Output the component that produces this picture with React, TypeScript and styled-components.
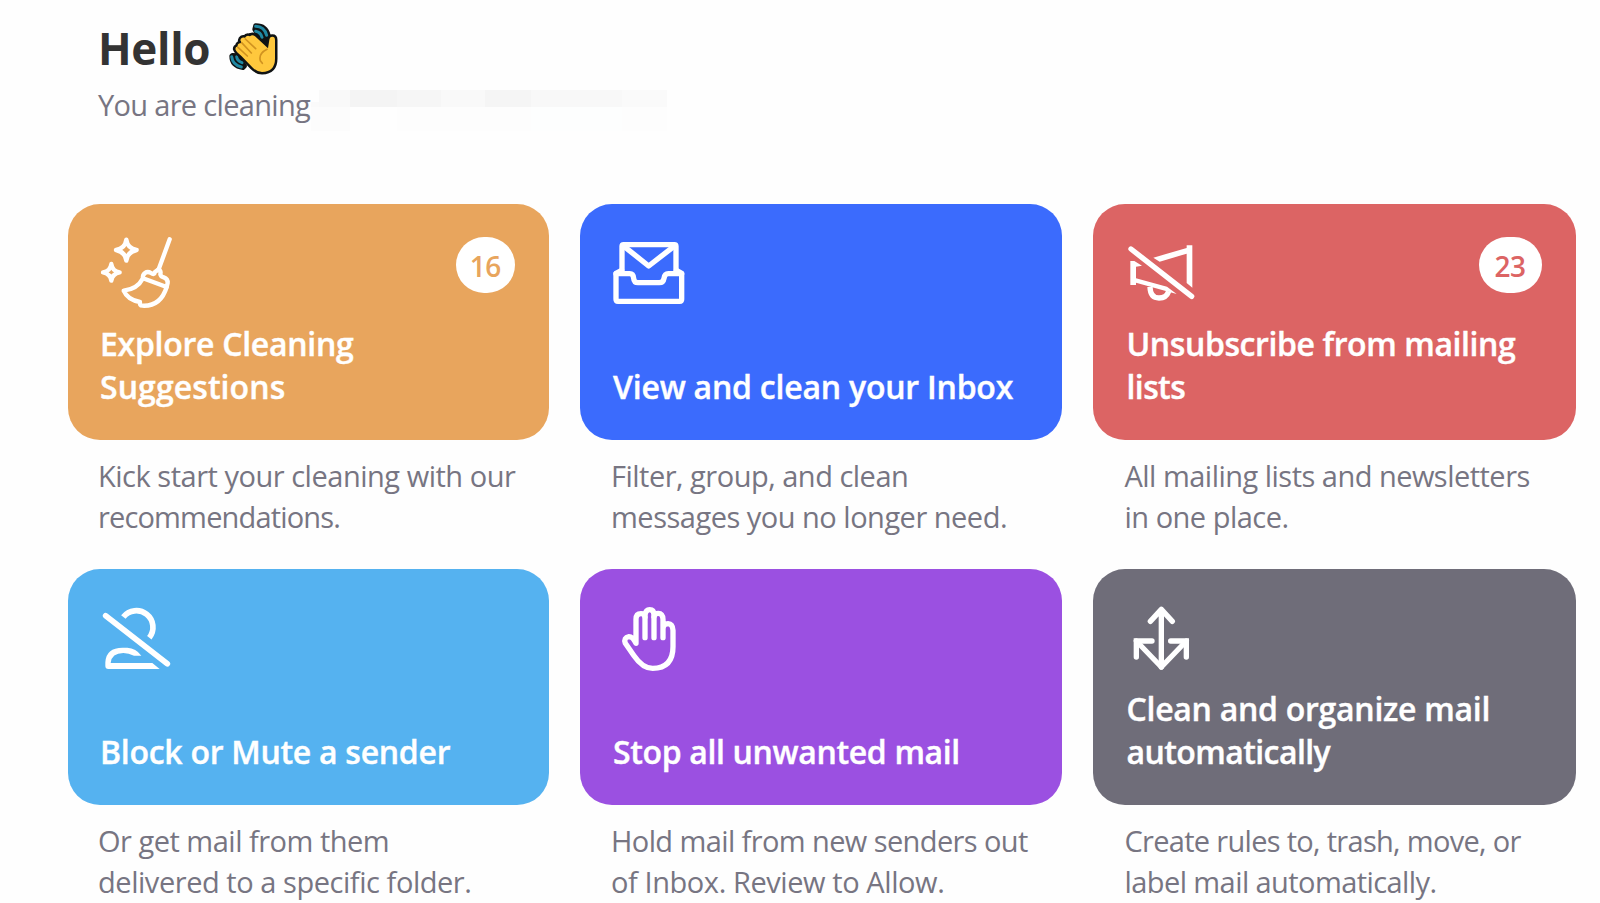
import React from "react";
import styled, { createGlobalStyle, ThemeProvider } from "styled-components";

const theme = {
  colors: {
    page: "#fefefe",
    heading: "#333333",
    muted: "#777582",
    white: "#ffffff",
    orange: "#e8a55d",
    blue: "#3b6bfd",
    red: "#dc6464",
    sky: "#55b2f0",
    purple: "#9b50e1",
    slate: "#6f6d79",
  },
};

type ColorName = keyof typeof theme.colors;

interface TextLine {
  text: string;
  tracking: number;
}

interface ActionCardProps {
  color: ColorName;
  icon: React.ReactNode;
  title: TextLine[];
  description: TextLine[];
  badge?: { count: number; width: number };
}

const GlobalStyle = createGlobalStyle`
  body {
    margin: 0;
    background: ${theme.colors.page};
    font-family: "Segoe UI", "Open Sans", "Noto Sans", sans-serif;
    overflow: hidden;
  }

  * {
    box-sizing: border-box;
  }
`;

const Page = styled.main`
  width: 1600px;
  height: 903px;
  overflow: hidden;
`;

const Header = styled.header`
  height: 204px;
  padding: 18px 0 0 98px;
`;

const Greeting = styled.div`
  display: flex;
  align-items: flex-start;
  height: 60px;
`;

const Heading = styled.h1`
  width: 131px;
  margin: 0;
  color: ${({ theme }) => theme.colors.heading};
  font-size: 44px;
  font-weight: 700;
  line-height: 60px;
  letter-spacing: -0.3px;
`;

const WaveIcon = styled.svg`
  width: 49px;
  height: 52px;
  margin-top: 5px;
`;

const Account = styled.div`
  display: flex;
  align-items: flex-start;
  padding-top: 6px;
`;

const AccountLabel = styled.span`
  width: 213px;
  color: ${({ theme }) => theme.colors.muted};
  font-size: 29px;
  line-height: 41px;
  letter-spacing: -0.68px;
  white-space: nowrap;
`;

const HiddenAddress = styled.div`
  display: flex;
  align-items: flex-end;
  height: 41px;
  margin-top: 6px;
`;

const HiddenBlock = styled.span<{ $width: number; $top: number; $upper: string; $lower: string }>`
  width: ${({ $width }) => $width}px;
  height: ${({ $top }) => $top + 24}px;
  background: ${({ $lower }) => $lower};
  border-top: ${({ $top, $upper }) => `${$top}px solid ${$upper}`};
`;

const CardGrid = styled.section`
  display: grid;
  grid-template-columns: 481px 481.5px 483px;
  column-gap: 31px;
  row-gap: 32px;
  padding-left: 68px;
`;

const Tile = styled.div<{ $color: ColorName }>`
  display: flex;
  flex-direction: column;
  justify-content: space-between;
  height: 236px;
  padding: 31px 34px 32px 32px;
  border-radius: 32px;
  color: ${({ theme }) => theme.colors.white};
  background: ${({ theme, $color }) => theme.colors[$color]};
`;

const TileTop = styled.div`
  display: flex;
  justify-content: space-between;
  height: 75px;
`;

const IconSvg = styled.svg<{ $weight?: number }>`
  width: 75px;
  height: 75px;
  fill: none;
  stroke: currentColor;
  stroke-width: ${({ $weight }) => $weight ?? 16};
  stroke-linecap: round;
  stroke-linejoin: round;
`;

const Badge = styled.span<{ $color: ColorName; $width: number }>`
  width: ${({ $width }) => $width}px;
  height: 56px;
  margin-top: 2px;
  border-radius: 28px;
  color: ${({ theme, $color }) => theme.colors[$color]};
  background: ${({ theme }) => theme.colors.white};
  font-size: 28px;
  font-weight: 600;
  line-height: 58px;
  letter-spacing: -0.5px;
  text-align: center;
`;

const Title = styled.h2`
  margin: 0;
  font-size: 32px;
  font-weight: 600;
  line-height: 43px;
  -webkit-text-stroke: 0.4px currentColor;
`;

const Description = styled.p`
  margin: 0;
  padding: 15px 0 0 31px;
  color: ${({ theme }) => theme.colors.muted};
  font-size: 29px;
  line-height: 41px;
`;

const Card = styled.article`
  &:nth-child(3n + 1) ${Description} {
    padding-left: 30px;
  }

  &:nth-child(3n + 2) ${Title} {
    padding-left: 1px;
  }

  &:nth-child(3n) ${Title} {
    padding-left: 2px;
  }

  &:nth-child(3n) ${Description} {
    padding-left: 32px;
  }
`;

const Line = styled.span<{ $tracking: number }>`
  display: block;
  letter-spacing: ${({ $tracking }) => $tracking}px;
  white-space: nowrap;
`;

const BroomIcon = () => (
  <IconSvg viewBox="120 120 225 225" $weight={13}>
    <path d="M199 134Q203 161 230 165Q203 170 199 197Q195 170 168 165Q195 161 199 134Z" />
    <path d="M154 207Q157 229 179 232Q157 236 154 257Q151 236 129 232Q151 229 154 207Z" />
    <path d="M329 133 296 223" />
    <path d="M249 250Q247 240 255 234Q263 228 273 234Q283 241 285 231L296 223Q304 229 301 238Q303 245 311 247Q324 252 323 264L320 276Z" />
    <path d="M249 250Q232 283 191 287Q203 315 240 321Q238 332 247 332Q302 335 320 276" />
  </IconSvg>
);

const InboxIcon = () => (
  <IconSvg viewBox="126 120 225 225">
    <path d="M156 224V154Q156 149 161 149H313Q318 149 318 154V224" />
    <path d="M162 154 236 213 312 154" />
    <path d="M155 226 138 235V313Q138 319 144 319H329Q335 319 335 313V235L319 226" />
    <path d="M138 236H179Q190 236 191 250Q192 263 204 263H268Q280 263 282 250Q284 236 295 236H335" />
  </IconSvg>
);

const MegaphoneOffIcon = () => (
  <IconSvg viewBox="120 120 225 225">
    <path d="M138 162 320 304" />
    <g fill="currentColor" stroke="none">
      <path d="M205 188 305 159V151H322V278L305 264V176L224 200Z" />
      <path d="M136 198H148L171 212 153 215V250L246 275 275 297 153 263V270H136Z" />
    </g>
    <path d="M195 276Q196 309 222 309Q244 309 251 289" strokeLinecap="butt" />
  </IconSvg>
);

const BlockUserIcon = () => (
  <IconSvg viewBox="120 120 225 225" $weight={17}>
    <path d="M137 167 322 311" />
    <path d="M190 171A49 49 0 1 1 268 233" strokeLinecap="butt" />
    <path
      d="M136 318V307Q138 263 188 263H202Q228 264 244 287H222Q206 279 190 279Q155 279 152 309H277L299 327H145Q136 327 136 318Z"
      fill="currentColor"
      stroke="none"
    />
  </IconSvg>
);

const HandIcon = () => (
  <IconSvg viewBox="126 120 225 225">
    <path d="M225 233V165Q227 149 239 149Q252 149 252 165V233" />
    <path d="M225 171Q224 161 213 161Q198 161 198 178V250Q188 230 177 230Q160 233 166 250L192 287Q218 325 248 325Q309 324 309 260V211Q308 192 294 191Q279 191 279 208V233V178Q278 160 265 160Q254 160 252 170" />
  </IconSvg>
);

const OrganizeIcon = () => (
  <IconSvg viewBox="120 120 225 225">
    <path d="M229 148V321M196 184 229 148 262 184" />
    <path d="M229 321 154 243M229 321 304 243" />
    <path d="M154 291V243H201M304 291V243H257" strokeLinejoin="miter" />
  </IconSvg>
);

const Wave: React.FC = () => (
  <WaveIcon viewBox="0 0 147 156" fill="none" strokeLinecap="round" strokeLinejoin="round">
    <path d="M79 7Q111 6 119 37L117 62 95 50 76 19Z" fill="#101314" stroke="#101314" strokeWidth="12" />
    <path d="M7 99Q7 130 42 135L48 129 25 97 10 96Z" fill="#101314" stroke="#101314" strokeWidth="12" />
    <path d="M80 10Q106 11 113 37M80 25Q95 28 99 43" stroke="#2088a3" strokeWidth="9" />
    <path d="M8 101Q11 126 37 132M23 101Q24 114 39 119" stroke="#2088a3" strokeWidth="9" />
    <path
      d="M138 51Q138 41 130 41Q122 41 121 51L117 76 78 40Q70 33 63 40Q54 35 48 44Q36 41 34 52L38 60Q25 60 26 70Q19 72 19 78Q21 86 38 100L70 133Q84 147 99 147Q138 145 138 107Z"
      fill="#ffc83d"
      stroke="#101314"
      strokeWidth="15"
      paintOrder="stroke"
    />
    <path d="M49 48 80 77M38 59 67 90M27 73 55 99M114 79Q88 92 94 113L100 121" stroke="#d19320" strokeWidth="5" />
  </WaveIcon>
);

const hiddenBlocks = [
  { width: 8, top: 5, upper: "#fafafa", lower: "#fcfcfc" },
  { width: 31, top: 17, upper: "#f9f9f9", lower: "#fcfcfc" },
  { width: 47, top: 17, upper: "#f4f4f4", lower: "#fefefe" },
  { width: 44, top: 17, upper: "#f6f6f6", lower: "#fdfdfd" },
  { width: 44, top: 17, upper: "#f9f9f9", lower: "#fdfdfd" },
  { width: 46, top: 17, upper: "#f5f5f5", lower: "#fdfdfd" },
  { width: 91, top: 17, upper: "#f8f8f8", lower: "#fdfefe" },
  { width: 45, top: 17, upper: "#fafafa", lower: "#fdfdfd" },
];

const cards: ActionCardProps[] = [
  {
    color: "orange",
    icon: <BroomIcon />,
    badge: { count: 16, width: 59.5 },
    title: [
      { text: "Explore Cleaning", tracking: -0.28 },
      { text: "Suggestions", tracking: 0.08 },
    ],
    description: [
      { text: "Kick start your cleaning with our", tracking: -0.48 },
      { text: "recommendations.", tracking: -0.84 },
    ],
  },
  {
    color: "blue",
    icon: <InboxIcon />,
    title: [{ text: "View and clean your Inbox", tracking: -0.22 }],
    description: [
      { text: "Filter, group, and clean", tracking: -0.5 },
      { text: "messages you no longer need.", tracking: -0.5 },
    ],
  },
  {
    color: "red",
    icon: <MegaphoneOffIcon />,
    badge: { count: 23, width: 63 },
    title: [
      { text: "Unsubscribe from mailing", tracking: -0.4 },
      { text: "lists", tracking: -0.6 },
    ],
    description: [
      { text: "All mailing lists and newsletters", tracking: -0.52 },
      { text: "in one place.", tracking: -0.5 },
    ],
  },
  {
    color: "sky",
    icon: <BlockUserIcon />,
    title: [{ text: "Block or Mute a sender", tracking: -0.28 }],
    description: [
      { text: "Or get mail from them", tracking: -0.5 },
      { text: "delivered to a specific folder.", tracking: -0.45 },
    ],
  },
  {
    color: "purple",
    icon: <HandIcon />,
    title: [{ text: "Stop all unwanted mail", tracking: -0.35 }],
    description: [
      { text: "Hold mail from new senders out", tracking: -0.6 },
      { text: "of Inbox. Review to Allow.", tracking: -0.42 },
    ],
  },
  {
    color: "slate",
    icon: <OrganizeIcon />,
    title: [
      { text: "Clean and organize mail", tracking: -0.27 },
      { text: "automatically", tracking: -0.58 },
    ],
    description: [
      { text: "Create rules to, trash, move, or", tracking: -0.7 },
      { text: "label mail automatically.", tracking: -0.58 },
    ],
  },
];

const Lines: React.FC<{ lines: TextLine[] }> = ({ lines }) => (
  <>
    {lines.map(({ text, tracking }) => (
      <Line key={text} $tracking={tracking}>
        {text}
      </Line>
    ))}
  </>
);

const ActionCard: React.FC<ActionCardProps> = (props) => {
  return (
    <Card>
      <Tile $color={props.color}>
        <TileTop>
          {props.icon}
          {props.badge && (
            <Badge $color={props.color} $width={props.badge.width}>
              {props.badge.count}
            </Badge>
          )}
        </TileTop>
        <Title>
          <Lines lines={props.title} />
        </Title>
      </Tile>
      <Description>
        <Lines lines={props.description} />
      </Description>
    </Card>
  );
};

const App: React.FC = () => {
  return (
    <ThemeProvider theme={theme}>
      <GlobalStyle />
      <Page>
        <Header>
          <Greeting>
            <Heading>Hello</Heading>
            <Wave />
          </Greeting>
          <Account>
            <AccountLabel>You are cleaning</AccountLabel>
            <HiddenAddress>
              {hiddenBlocks.map((block, index) => (
                <HiddenBlock
                  key={index}
                  $width={block.width}
                  $top={block.top}
                  $upper={block.upper}
                  $lower={block.lower}
                />
              ))}
            </HiddenAddress>
          </Account>
        </Header>
        <CardGrid>
          {cards.map((card) => (
            <ActionCard key={card.color} {...card} />
          ))}
        </CardGrid>
      </Page>
    </ThemeProvider>
  );
};

export default App;
